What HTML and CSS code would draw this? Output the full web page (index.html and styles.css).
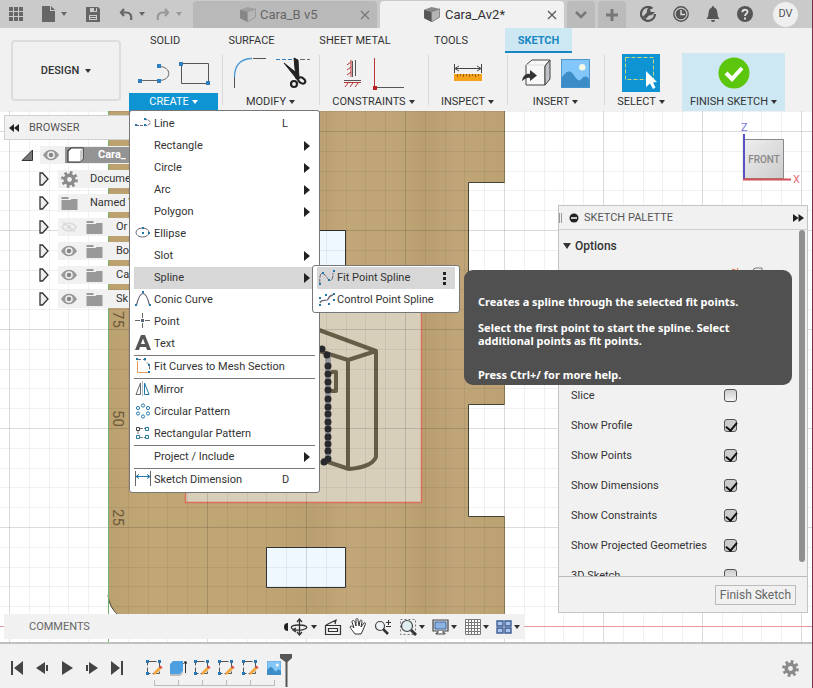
FILE: index.html
```html
<!DOCTYPE html>
<html lang="en">
<head>
<meta charset="utf-8">
<title>Cara_A v2*</title>
<link rel="stylesheet" href="styles.css">
</head>
<body>
<svg class="defs" width="0" height="0" aria-hidden="true">
  <symbol id="eye" viewBox="0 0 16 12"><path d="M0 6C4-1 12-1 16 6 12 13 4 13 0 6Z" fill="#999"/><circle cx="8" cy="6" r="3.8" fill="#f1f1f1"/><circle cx="8" cy="6" r="2.3" fill="#888"/></symbol>
  <symbol id="eye-off" viewBox="0 0 16 12"><path d="M1 6C4 1 12 1 15 6 12 11 4 11 1 6ZM2 1 14 11" fill="none" stroke="#dadada" stroke-width="1.6"/><circle cx="8" cy="6" r="2" fill="#dadada"/></symbol>
  <symbol id="folder" viewBox="0 0 16 13"><path d="M0 0H7V2H0ZM0 3H9L10 2H16V13H0Z" fill="#999"/></symbol>
  <symbol id="gear" viewBox="0 0 16 16"><circle cx="8" cy="8" r="6.4" fill="none" stroke="#8a8a8a" stroke-width="3" stroke-dasharray="2.5 2.53"/><circle cx="8" cy="8" r="4" fill="none" stroke="#8a8a8a" stroke-width="3.4"/></symbol>
  <symbol id="twist" viewBox="0 0 10 14"><path d="M1 1H3.500L9 7 3.500 13H1Z" fill="#eee" stroke="#333" stroke-width="1.3"/></symbol>
  <symbol id="sketch" viewBox="0 0 18 18"><path d="M2.500 2.500H14.500V14.500H2.500Z" fill="none" stroke="#555" stroke-dasharray="9 2"/><path d="M1 1h3v3H1zM13 1h3v3h-3zM1 13h3v3H1z" fill="#2878b8"/><path d="M8 16 9 13 14 8 16 10 11 15Z" fill="#f0a63c"/><path d="M14 8 15.500 6.500 17.500 8.500 16 10Z" fill="#e04b3c"/></symbol>
  <symbol id="photo" viewBox="0 0 30 30"><path d="M0 0H30V30H0Z" fill="#83c6fa"/><path d="M0 20C4 15 6 12 9 13 13 14 15 21 18 22 21 23 22 18 25 18 27 18 28 19 30 22V30H0Z" fill="#3c8cc8"/><circle cx="22" cy="8.500" r="3.300" fill="#f4f8e8"/><path d="M.5.5H29.500V29.500H.5Z" fill="none" stroke="#4a94ca"/></symbol>
  <symbol id="cube" viewBox="0 0 17 16"><path d="M0 3 8 0 17 2 8 5Z" fill="#888"/><path d="M0 3 8 5V16L0 12Z" fill="#555"/><path d="M8 5 16.500 2V11L8 16Z" fill="#b4b4b4" stroke="#666" stroke-width=".7"/></symbol>
</svg>
<div class="app">
  <header class="topbar">
    <div class="quick">
      <button aria-label="Data panel"><svg width="15" height="15"><path d="M0 0h4v4H0zM5 0h4v4H5zM10 0h4v4h-4zM0 5h4v4H0zM5 5h4v4H5zM10 5h4v4h-4zM0 10h4v4H0zM5 10h4v4H5zM10 10h4v4h-4z" fill="#666"/></svg></button>
      <button class="file" aria-label="File"><svg width="13" height="16"><path d="M0 0H8V5H13V16H0ZM9 0 13 4H9Z" fill="#666"/></svg><i class="caret"></i></button>
      <button class="save" aria-label="Save"><svg width="14" height="15"><path d="M0 0H12L14 2V15H0Z" fill="#666"/><path d="M4 1H11V5H4ZM3 8H11V13H3Z" fill="#ccc"/><path d="M8 1h2v3H8zM4 9h6v1H4zM4 11h6v1H4z" fill="#666"/></svg></button>
      <button class="undo" aria-label="Undo"><svg width="14" height="12"><path d="M5 1 2 4.500 5 8M2 4.500H7C11 4.500 13 7 12 12" fill="none" stroke="#666" stroke-width="2.200"/></svg><i class="caret"></i></button>
      <button class="undo off" aria-label="Redo"><svg width="14" height="12"><path d="M9 1 12 4.500 9 8M12 4.500H7C3 4.500 1 7 2 12" fill="none" stroke="#666" stroke-width="2.200"/></svg><i class="caret"></i></button>
    </div>
    <nav class="docs" aria-label="Documents">
      <div class="doc"><svg class="faded" width="16" height="15"><use href="#cube"/></svg><a href="#">Cara_B v5</a><button aria-label="Close Cara_B"><svg width="10" height="10"><path d="M1 1 9 9M9 1 1 9" stroke="#777" stroke-width="1.200"/></svg></button></div>
      <div class="doc current"><svg width="16" height="15"><use href="#cube"/></svg><a href="#">Cara_Av2*</a><button aria-label="Close Cara_A"><svg width="10" height="10"><path d="M1 1 9 9M9 1 1 9" stroke="#555" stroke-width="1.200"/></svg></button></div>
      <button class="mini" aria-label="Open documents"><svg width="14" height="10"><path d="M2 2 7 7 12 2" fill="none" stroke="#777" stroke-width="2.500"/></svg></button>
      <button class="mini" aria-label="New document"><svg width="14" height="14"><path d="M7 1V13M1 7H13" stroke="#777" stroke-width="3"/></svg></button>
    </nav>
    <div class="account">
      <button aria-label="Extensions"><svg width="16" height="16"><path d="M12.500 2.500A7 7 0 1 0 15 8" fill="none" stroke="#555" stroke-width="2.200"/><path d="M4 12 9 7" stroke="#555" stroke-width="3.600"/><path d="M7 4.500C6 9 8 10 12 9L15 6 11 6 10 4 12 1C9 1 7 2 7 4.500Z" fill="#555"/></svg></button>
      <button aria-label="Job status"><svg width="16" height="16"><circle cx="8" cy="8" r="7.200" fill="none" stroke="#555" stroke-width="1.400"/><circle cx="8" cy="8" r="5.300" fill="#555"/><path d="M8 4V8.500H12" fill="none" stroke="#ddd" stroke-width="1.400"/></svg></button>
      <button aria-label="Notifications"><svg width="14" height="16"><path d="M7 0C8 0 8 1 8.500 1.800 13 3.500 10 9 13.500 13H.5C4 9 1 3.500 5.500 1.800 6 1 6 0 7 0ZM5 14H9C9 16.500 5 16.500 5 14Z" fill="#555"/></svg></button>
      <button aria-label="Help"><svg width="16" height="16"><circle cx="8" cy="8" r="8" fill="#555"/><path d="M5.300 6.200C5.500 2.800 10.700 3 10.500 6 10.400 7.900 8 7.800 8 10" fill="none" stroke="#ddd" stroke-width="1.900"/><path d="M7 11.500h2v2H7z" fill="#ddd"/></svg></button>
      <button class="avatar">DV</button>
    </div>
  </header>

  <div class="ribbon">
    <button class="design">DESIGN <i class="caret"></i></button>
    <nav class="tabs" aria-label="Workspace tabs">
      <a href="#" class="solid">SOLID</a><a href="#" class="surface">SURFACE</a><a href="#" class="sheet">SHEET METAL</a><a href="#" class="tools">TOOLS</a><a href="#" class="sketch" aria-current="page">SKETCH</a>
    </nav>
    <div class="groups">
      <section class="group create">
        <div class="tools-row">
          <svg width="33" height="22"><path d="M3 18.500H22C35 18.500 35 4.500 22 4.500" fill="none" stroke="#666"/><path d="M1 17h4v4H1zM20 17h4v4h-4zM20 2h4v4h-4z" fill="#2f7fc0"/></svg>
          <svg width="32" height="24"><path d="M3.500 2.500H30.500V22.500H3.500Z" fill="none" stroke="#555"/><path d="M1 1h4v4H1zM28 20h4v4h-4z" fill="#2f7fc0"/></svg>
        </div>
        <button class="label">CREATE <i class="caret"></i></button>
        <ul class="menu">
          <li><button><svg width="16" height="16"><path d="M1 10.500H10C17 10.500 17 4.500 10 4.500" fill="none" stroke="#667" stroke-dasharray="3 1"/><path d="M0 9h2v2H0zM9 9h2v2H9zM9 3h2v2H9z" fill="#27a"/></svg>Line<kbd>L</kbd></button></li>
          <li><button>Rectangle<i class="more"></i></button></li>
          <li><button>Circle<i class="more"></i></button></li>
          <li><button>Arc<i class="more"></i></button></li>
          <li><button>Polygon<i class="more"></i></button></li>
          <li><button><svg width="16" height="16"><ellipse cx="7.500" cy="7.500" rx="6.500" ry="4.500" fill="none" stroke="#667"/><path d="M7 7h2v2H7zM7 2h2v2H7zM13 7h2v2h-2z" fill="#27a"/></svg>Ellipse</button></li>
          <li><button>Slot<i class="more"></i></button></li>
          <li class="open"><button>Spline<i class="more"></i></button>
            <ul class="submenu">
              <li class="open"><button><svg width="18" height="18"><path d="M2 15C1 7 3 2 6 5L11 11C14 13 15 9 15 4" fill="none" stroke="#667" stroke-dasharray="5 1"/><path d="M1 14h2v2H1zM4 3h2v2H4zM10 10h2v2h-2zM15 1h2v2h-2z" fill="#27a"/></svg>Fit Point Spline<i class="dots"></i></button></li>
              <li><button><svg width="18" height="18"><path d="M2 12C3 8 6 10 9 9 12 8 9 5 15 4" fill="none" stroke="#667" stroke-width="1.300"/><path d="M1 13h2v2H1zM1 6h2v2H1zM7 3h2v2H7zM10 12h2v2h-2zM15 2h2v2h-2zM15 8h2v2h-2z" fill="#27a"/></svg>Control Point Spline</button></li>
            </ul>
            <div class="tooltip" role="tooltip">
              <p>Creates a spline through the selected fit points.</p>
              <p>Select the first point to start the spline. Select additional points as fit points.</p>
              <p class="hint">Press Ctrl+/ for more help.</p>
            </div>
          </li>
          <li><button><svg width="16" height="16"><path d="M1.500 14C3 8 5 2.500 8 2.500S13 8 14.500 14" fill="none" stroke="#667" stroke-width="1.200"/><path d="M0 13h2v2H0zM14 13h2v2h-2zM7 0h2v2H7z" fill="#27a"/></svg>Conic Curve</button></li>
          <li><button><svg width="16" height="16"><path d="M0 7.500H5M10 7.500H15M7.500 0V5M7.500 10V15" stroke="#666"/><path d="M6 6h3v3H6z" fill="#567"/></svg>Point</button></li>
          <li><button><svg width="16" height="16"><path d="M0 15 6 0H10L16 15H12L11 12H5L4 15ZM6 9H10L8 3.500Z" fill="#555" fill-rule="evenodd"/></svg>Text</button></li>
          <li class="ruled"><button><svg width="16" height="16"><path d="M2.500 3V14.500H13" fill="none" stroke="#e79a55"/><path d="M3 1.500H9L14.500 7V14" fill="none" stroke="#667" stroke-dasharray="3 2"/><path d="M1 0h2v2H1zM9 0h2v2H9zM13 6h2v2h-2zM13 13h2v2h-2z" fill="#27a"/></svg>Fit Curves to Mesh Section</button></li>
          <li class="ruled"><button><svg width="16" height="16"><path d="M5.500 2V13.500H1Z" fill="none" stroke="#666"/><path d="M9.500 2V13.500H14Z" fill="none" stroke="#27a"/><path d="M7.500 0V15" stroke="#abc"/></svg>Mirror</button></li>
          <li><button><svg width="16" height="16" fill="none" stroke="#2878a8"><circle cx="8" cy="2.500" r="1.600"/><circle cx="3" cy="5" r="1.600"/><circle cx="13" cy="5" r="1.600"/><circle cx="3" cy="10.500" r="1.600"/><circle cx="13" cy="10.500" r="1.600"/><circle cx="8" cy="13.500" r="1.600"/></svg>Circular Pattern</button></li>
          <li><button><svg width="16" height="16" fill="none"><path d="M5 3.500H10M3 6V10M5 12.500H10" stroke="#777" stroke-dasharray="3 1"/><path d="M1.500 2.500h3v3h-3z" stroke="#444"/><path d="M10.500 2.500h3v3h-3zM1.500 10.500h3v3h-3zM10.500 10.500h3v3h-3z" stroke="#2878a8"/></svg>Rectangular Pattern</button></li>
          <li class="ruled"><button>Project / Include<i class="more"></i></button></li>
          <li class="ruled"><button><svg width="16" height="16"><path d="M.5 0V15M15.500 0V15" stroke="#666"/><path d="M1 5.500H15M4 3.500 1 5.500 4 7.500M12 3.500 15 5.500 12 7.500" fill="none" stroke="#27a"/></svg>Sketch Dimension<kbd>D</kbd></button></li>
        </ul>
      </section>
      <section class="group modify">
        <div class="tools-row">
          <svg width="36" height="34"><path d="M2.500 32V21" stroke="#555"/><path d="M2.500 21C2.500 9 9 2.500 20 2.500" fill="none" stroke="#4a9ad4" stroke-width="1.300"/><path d="M21 2.500H34" stroke="#555"/></svg>
          <svg width="34" height="34"><path d="M0 3.500H20" stroke="#2f7fc0" stroke-dasharray="4 2"/><path d="M24 3.500H34" stroke="#666" stroke-dasharray="5 2"/><path d="M8 7 20 22 23 19ZM18 2 20 23H23L22 4Z" fill="#222" stroke="#222"/><circle cx="18" cy="28" r="3" fill="none" stroke="#222" stroke-width="2.200"/><ellipse cx="26" cy="24.500" rx="4" ry="2.600" fill="none" stroke="#222" stroke-width="2.200" transform="rotate(35 26 24)"/></svg>
        </div>
        <button class="label">MODIFY <i class="caret"></i></button>
      </section>
      <section class="group constraints">
        <div class="tools-row">
          <svg width="20" height="32"><path d="M9.500 4V20M12.500 3V19M1 23.500H18" stroke="#555"/><path d="M8 3V20M8 5 4 8M8 10 4 13M8 15 4 18M1 25.500H18M5 26 2 30M10 26 7 30M15 26 12 30" stroke="#b33" fill="none"/></svg>
          <svg width="34" height="34"><path d="M3.500 2V32" stroke="#b33"/><path d="M4 31.500H33" stroke="#555"/><path d="M2 30h4v4H2z" fill="#b22"/></svg>
        </div>
        <button class="label">CONSTRAINTS <i class="caret"></i></button>
      </section>
      <section class="group inspect">
        <div class="tools-row"><svg width="30" height="20"><path d="M1.500 1V10M28.500 1V10M2 5.500H28M6 3 2 5.500 6 8M24 3 28 5.500 24 8" fill="none" stroke="#444"/><path d="M1 11H29V18H1Z" fill="#f5a31b"/><path d="M4.500 11v3M7.500 11v2M10.500 11v3M13.500 11v2M16.500 11v3M19.500 11v2M22.500 11v3M25.500 11v2" stroke="#965c08"/></svg></div>
        <button class="label">INSPECT <i class="caret"></i></button>
      </section>
      <section class="group insert">
        <div class="tools-row">
          <svg width="32" height="32"><path d="M5 8 11 3H29L24 9V28H5Z" fill="#f8f8f8" stroke="#444"/><path d="M24 9 29 3V22L24 28Z" fill="#bfc2c6" stroke="#444"/><path d="M5 8H24" stroke="#ddd"/><path d="M1 24C2 18 6 16 9 17V13L16 18.500 9 24V21C6 20 4 22 1 24Z" fill="#333"/></svg>
          <svg width="29" height="29"><use href="#photo"/></svg>
        </div>
        <button class="label">INSERT <i class="caret"></i></button>
      </section>
      <section class="group select">
        <div class="tools-row"><svg width="38" height="38"><path d="M0 0H38V38H0Z" fill="#0e93d3"/><path d="M3.500 3.500H31.500V25.500H3.500Z" fill="none" stroke="#c8d87c" stroke-dasharray="4 2"/><path d="M24 17V33L28 29.500 31 35 33.500 33.500 31 28.500 35 28Z" fill="#fff"/></svg></div>
        <button class="label">SELECT <i class="caret"></i></button>
      </section>
      <section class="group finish">
        <div class="tools-row"><svg width="32" height="32"><circle cx="16" cy="16" r="15.500" fill="#5cc60c"/><path d="M8 16 14 22 24 11" fill="none" stroke="#fff" stroke-width="4"/></svg></div>
        <button class="label">FINISH SKETCH <i class="caret"></i></button>
      </section>
    </div>
  </div>

  <main class="viewport">
    <svg class="scene" aria-label="Sketch canvas">
      <defs>
        <pattern id="grid" x="9" y="20" width="99" height="99" patternUnits="userSpaceOnUse">
          <path d="M20.500 0V99M40.500 0V99M59.500 0V99M79.500 0V99M0 20.500H99M0 40.500H99M0 59.500H99M0 79.500H99" stroke="#000" stroke-opacity=".06"/>
          <path d="M.5 0V99M0 .5H99" stroke="#000" stroke-opacity=".14"/>
        </pattern>
        <linearGradient id="wood">
          <stop offset="0" stop-color="#bba070"/><stop offset=".1" stop-color="#c1a676"/><stop offset=".4" stop-color="#bfa474"/><stop offset=".52" stop-color="#baa070"/><stop offset=".6" stop-color="#c1a778"/><stop offset=".74" stop-color="#bfa476"/><stop offset=".8" stop-color="#b99e70"/><stop offset=".88" stop-color="#c0a578"/><stop offset="1" stop-color="#bca172"/>
        </linearGradient>
      </defs>
      <path d="M0 0H3000V3000H0Z" fill="#fff"/>
      <path d="M108 0H504V72H469V183H504V294H469V405H504V504H119Q108 496 108 484Z" fill="url(#wood)"/>
      <path d="M504 71.500H468.500V183H504M504 293.500H468.500V405.500H504M108 484Q109 496 118 504" fill="none" stroke="#443"/>
      <path d="M504.500 0V72M504.500 183V294M504.500 405V504" stroke="#9d8860"/>
      <path d="M266.500 436.500H345.500V476.500H266.500ZM266.500 119.500H345.500V159.500H266.500Z" fill="#eff8ff" stroke="#333"/>
      <path d="M185.500 156.500H421.500V391.500H185.500Z" fill="#d8cfba" stroke="#d9705c" stroke-width="1.500"/>
      <g fill="none" stroke="#675c45" stroke-width="4" stroke-linejoin="round"><path d="M300 212 376 240 348 249 310 237M348 249V357M376 240V346Q372 356 349 358L322 349M330 261H336V280H330"/></g>
      <path d="M328 244V347" stroke="#9a9c9c" stroke-width="6"/>
      <g fill="#292a2d"><circle cx="322" cy="238" r="3.500"/><circle cx="327" cy="244" r="3.500"/><circle cx="328" cy="255" r="3.500"/><circle cx="328" cy="263" r="3.500"/><circle cx="328" cy="271" r="3.500"/><circle cx="328" cy="279" r="3.500"/><circle cx="328" cy="288" r="3.500"/><circle cx="328" cy="296" r="3.500"/><circle cx="328" cy="303" r="3.500"/><circle cx="328" cy="311" r="3.500"/><circle cx="328" cy="318" r="3.500"/><circle cx="328" cy="326" r="3.500"/><circle cx="328" cy="333" r="3.500"/><circle cx="328" cy="340" r="3.500"/><circle cx="328" cy="348" r="3.500"/><circle cx="324" cy="351" r="3.500"/></g>
      <path d="M0 0H3000V3000H0Z" fill="url(#grid)"/>
      <path d="M108.500 0V532" stroke="#6fb36f"/>
      <path d="M0 515.500H3000" stroke="#e59c9c"/>
      <g class="ruler"><text transform="translate(113 200) rotate(90)">75</text><text transform="translate(113 299) rotate(90)">50</text><text transform="translate(113 398) rotate(90)">25</text></g>
    </svg>

    <aside class="browser">
      <h2><svg width="10" height="8"><path d="M5 0V8L0 4ZM10 0V8L5 4Z" fill="#222"/></svg>BROWSER</h2>
      <ul class="tree">
        <li class="root"><svg width="12" height="12"><path d="M11.500 1V11.500H1Z" fill="#777" stroke="#333"/></svg><div class="node"><svg width="16" height="12"><use href="#eye"/></svg><span class="name"><svg width="17" height="16"><path d="M1 4 4 1H16V12L13 15H1Z" fill="#fff" stroke="#333" stroke-width="1.200"/><path d="M13 4 16 1V12L13 15Z" fill="#ccc"/></svg>Cara_</span></div></li>
        <li><svg width="10" height="14"><use href="#twist"/></svg><div class="node"><svg width="17" height="17"><use href="#gear"/></svg><span>Docume</span></div></li>
        <li><svg width="10" height="14"><use href="#twist"/></svg><div class="node"><svg width="17" height="13"><use href="#folder"/></svg><span>Named V</span></div></li>
        <li><svg width="10" height="14"><use href="#twist"/></svg><div class="node sub"><svg width="16" height="12"><use href="#eye-off"/></svg><svg width="17" height="13"><use href="#folder"/></svg><span>Or</span></div></li>
        <li><svg width="10" height="14"><use href="#twist"/></svg><div class="node sub"><svg width="16" height="12"><use href="#eye"/></svg><svg width="17" height="13"><use href="#folder"/></svg><span>Bo</span></div></li>
        <li><svg width="10" height="14"><use href="#twist"/></svg><div class="node sub"><svg width="16" height="12"><use href="#eye"/></svg><svg width="17" height="13"><use href="#folder"/></svg><span>Ca</span></div></li>
        <li><svg width="10" height="14"><use href="#twist"/></svg><div class="node sub"><svg width="16" height="12"><use href="#eye"/></svg><svg width="17" height="13"><use href="#folder"/></svg><span>Sk</span></div></li>
      </ul>
    </aside>

    <svg class="viewcube" width="66" height="66" aria-label="View cube">
      <defs><linearGradient id="face" x2="1" y2="1"><stop stop-color="#eee"/><stop offset="1" stop-color="#ccc"/></linearGradient></defs>
      <path d="M9.500 17.500H48.500V56.500H9.500Z" fill="url(#face)" stroke="#888"/>
      <path d="M9 12V57" stroke="#5a50c8" stroke-width="2"/><path d="M8 57.500H56" stroke="#d4505a" stroke-width="2"/>
      <text class="z" x="6" y="9">Z</text><text class="x" x="58" y="61">X</text><text class="front" x="29" y="41" text-anchor="middle">FRONT</text>
    </svg>

    <aside class="palette">
      <h2><i class="grip"></i><svg width="10" height="10"><circle cx="5" cy="5" r="4.500" fill="#222"/><path d="M2 5H8" stroke="#fff" stroke-width="1.500"/></svg>SKETCH PALETTE<svg class="end" width="11" height="8"><path d="M0 0V8L5.500 4ZM5.500 0V8L11 4Z" fill="#222"/></svg></h2>
      <div class="scroller">
        <h3><i class="caret"></i>Options</h3>
        <div class="linetype"><svg width="10" height="14"><path d="M2 13 8 1M2 2 8 4" stroke="#d86a3a"/></svg><svg width="16" height="14"><path d="M1 10V4Q1 1 4 1H10V4H14V10Z" fill="none" stroke="#777"/></svg></div>
        <label>Slice<input type="checkbox"></label>
        <label>Show Profile<input type="checkbox" checked></label>
        <label>Show Points<input type="checkbox" checked></label>
        <label>Show Dimensions<input type="checkbox" checked></label>
        <label>Show Constraints<input type="checkbox" checked></label>
        <label>Show Projected Geometries<input type="checkbox" checked></label>
        <label>3D Sketch<input type="checkbox"></label>
      </div>
      <footer><button>Finish Sketch</button></footer>
    </aside>

    <div class="dock">
      <span>COMMENTS</span>
      <div class="nav">
        <button aria-label="Orbit"><svg width="25" height="18"><path d="M4 5A4 4 0 0 0 4 13Z" fill="#222"/><path d="M15.500 1V17M13 4 15.500 1 18 4M13 14 15.500 17 18 14" fill="none" stroke="#333" stroke-width="1.300"/><path d="M12 12C5 11 6 7 14 7S25 9 21 11 16 12 10 12M12 10 9 12 12 14" fill="none" stroke="#333" stroke-width="1.300"/></svg><i class="caret"></i></button>
        <button aria-label="Look at"><svg width="18" height="18"><path d="M2 7 12 2 11 6M1.500 7.500H16.500V16.500H1.500ZM4.500 10.500H13.500V13.500H4.500Z" fill="none" stroke="#333" stroke-width="1.200"/></svg></button>
        <button aria-label="Pan"><svg width="18" height="18"><path d="M6 16C4 13 2 11 1 9 2 7 4 9 5 10L3 4C3 2 5 2 6 4L7 8 7 2C7 0 9 0 9 2L10 8 11 3C12 1 13 2 13 4L12 9 15 5C16 4 17 5 16 7L14 12 12 16Z" fill="#fff" stroke="#333"/></svg></button>
        <button aria-label="Zoom"><svg width="18" height="18"><circle cx="6" cy="8" r="4.500" fill="#eef3f6" stroke="#444" stroke-width="1.200"/><path d="M9 11 14 16" stroke="#333" stroke-width="2.500"/><path d="M12 4.500H17M14.500 2V7M12 8.500H17" stroke="#333"/></svg></button>
        <button aria-label="Fit"><svg width="18" height="18"><path d="M1.500 1.500H16.500V16.500H1.500Z" fill="none" stroke="#777" stroke-dasharray="2 2"/><circle cx="8" cy="8" r="5.500" fill="#dfecef" stroke="#444" stroke-width="1.200"/><path d="M12 12 17 17" stroke="#333" stroke-width="2.800"/></svg><i class="caret"></i></button>
        <button aria-label="Display settings"><svg width="17" height="17"><path d="M1 2H16V13H1Z" fill="#ddd" stroke="#444" stroke-width="1.200"/><path d="M3 4H14V11H3Z" fill="#8db2e0" stroke="#3868a8"/><path d="M6 13V15H4V16H13V15H11V13" fill="#fff" stroke="#444"/></svg><i class="caret"></i></button>
        <button aria-label="Grid and snaps"><svg width="17" height="17"><path d="M1.500 1.500H16.500V16.500H1.500ZM4.500 1V16M7.500 1V16M10.500 1V16M13.500 1V16M1 4.500H16M1 7.500H16M1 10.500H16M1 13.500H16" fill="#fff" stroke="#777"/></svg><i class="caret"></i></button>
        <button aria-label="Viewports"><svg width="16" height="14"><path d="M1 1H7V6H1ZM9 1H15V6H9ZM1 8H7V13H1ZM9 8H15V13H9Z" fill="#a9c4ec" stroke="#3c5c94" stroke-width="1.400"/></svg><i class="caret"></i></button>
      </div>
    </div>
  </main>

  <footer class="timeline">
    <div class="play">
      <button aria-label="Go to start"><svg width="14" height="14"><path d="M1 0H3V14H1ZM13 0V14L4 7Z" fill="#444"/></svg></button>
      <button aria-label="Step back"><svg width="14" height="12"><path d="M10 0V12L1 6ZM11 3H13V9H11Z" fill="#444"/></svg></button>
      <button aria-label="Play"><svg width="14" height="14"><path d="M2 0 13 7 2 14Z" fill="#444"/></svg></button>
      <button aria-label="Step forward"><svg width="14" height="12"><path d="M4 0V12L13 6ZM1 3H3V9H1Z" fill="#444"/></svg></button>
      <button aria-label="Go to end"><svg width="14" height="14"><path d="M11 0H13V14H11ZM1 0V14L10 7Z" fill="#444"/></svg></button>
    </div>
    <ol class="steps">
      <li><svg width="18" height="18"><use href="#sketch"/></svg></li>
      <li><svg width="18" height="18"><path d="M1 5 4 2H14V12L11 15H1Z" fill="#4c9fe0"/><path d="M1 15H11L14 12V14L11 17H1Z" fill="#bbb"/><path d="M16.500 14V3M14.500 5 16.500 2 18 5" fill="none" stroke="#333"/></svg></li>
      <li><svg width="18" height="18"><use href="#sketch"/></svg></li>
      <li><svg width="18" height="18"><use href="#sketch"/></svg></li>
      <li><svg width="18" height="18"><use href="#sketch"/></svg></li>
      <li><svg width="14" height="14"><use href="#photo"/></svg></li>
    </ol>
    <svg class="marker" width="12" height="33"><path d="M0 0H12V4L7.500 8V33H5.500V8L0 4Z" fill="#555"/></svg>
    <button class="prefs" aria-label="Timeline settings"><svg width="17" height="17"><use href="#gear"/></svg></button>
  </footer>
</div>
</body>
</html>
```
FILE: styles.css
```css
* { box-sizing: border-box; }
body { margin: 0; font: 11px/14px Roboto, "Liberation Sans", sans-serif; color: #333; }
button { border: 0; padding: 0; margin: 0; background: none; font: inherit; color: inherit; display: flex; align-items: center; }
a { color: inherit; text-decoration: none; }
ul, ol { list-style: none; margin: 0; padding: 0; }
h2, h3, p { margin: 0; }
svg { display: block; flex: none; }
.defs { position: absolute; }

.app { display: grid; grid-template-rows: 28px auto 1fr auto; min-height: 100vh; background: #f1f1f1; border-right: 1px solid #7c3048; overflow: hidden; }
.caret { width: 0; height: 0; border: 3px solid transparent; border-top: 4px solid #333; border-bottom: 0; flex: none; }

/* Title bar */
.topbar { display: flex; background: #cacaca; }
.quick { display: flex; align-items: center; width: 193px; padding-left: 9px; }
.quick .caret { border-top-color: #666; }
.quick button { gap: 6px; }
.file { margin-left: 18px; }
.save { margin-left: 19px; }
.undo { margin-left: 19px; }
.undo + .undo { margin-left: 11px; }
.off { opacity: .5; }
.docs { display: flex; align-items: stretch; gap: 3px; font-size: 13px; }
.doc { width: 184px; margin-top: 1px; padding: 0 7px 0 47px; display: flex; align-items: center; gap: 4px; background: #b9b9b9; border-radius: 4px 4px 0 0; color: #666; }
.doc.current { padding-left: 44px; background: #f1f1f1; color: #333; gap: 5px; }
.doc button { margin-left: auto; }
.faded { opacity: .5; }
.mini { width: 28px; margin-top: 1px; justify-content: center; background: #bbb; border-radius: 4px 4px 0 0; }
.account { display: flex; flex: 1; align-items: center; justify-content: flex-end; gap: 17px; padding-right: 14px; }
.avatar { width: 25px; height: 25px; margin-left: 3px; border-radius: 50%; background: #efefef; justify-content: center; color: #555; }

/* Ribbon */
.ribbon { display: grid; grid-template-columns: 129px 1fr; grid-template-rows: 25px 58px; }
.design { grid-row: 1 / 3; margin: 12px 8px 10px 11px; justify-content: center; gap: 6px; border: 2px solid #ddd; border-radius: 4px; font-weight: 500; }
.tabs { display: flex; }
.tabs a { display: flex; align-items: center; justify-content: center; }
.solid { width: 72px; }
.surface { width: 101px; }
.sheet { width: 106px; }
.tools { width: 86px; }
.tabs .sketch { width: 67px; margin-left: 11px; padding-top: 2px; border-bottom: 2px solid #1a87c4; background: #cde8f3; color: #1a87c4; font-weight: 700; }
.groups { display: flex; }
.group { position: relative; display: flex; flex-direction: column; justify-content: flex-end; }
.group + .group::before { content: ""; position: absolute; left: 0; top: 2px; bottom: 6px; width: 1px; background: #d8d8d8; }
.tools-row { flex: 1; display: flex; align-items: center; justify-content: center; gap: 8px; }
.label { height: 18px; justify-content: center; gap: 3px; white-space: nowrap; }
.create { width: 93px; }
.create > .tools-row { justify-content: flex-start; padding-left: 8px; }
.create > .label { width: 89px; background: #0e93d3; color: #fff; }
.create > .label .caret { border-top-color: #fff; }
.modify { width: 97px; }
.constraints { width: 109px; }
.inspect { width: 79px; }
.insert { width: 97px; }
.select { width: 74px; }
.finish { width: 103px; margin-left: 4px; background: #cde8f3; }
.group.finish::before { display: none; }

/* Create menu */
.menu, .submenu { position: absolute; z-index: 5; padding: 1px 0; background: #fff; border: 1px solid #777; border-radius: 3px; font-size: 11px; }
.menu { left: 0; top: 57px; padding-top: 2px; width: 191px; }
.menu li { position: relative; padding-left: 4px; }
.menu li > button { position: relative; width: 100%; height: 22px; padding-left: 20px; }
.menu button > svg { position: absolute; left: 1px; top: 2px; }
.menu .open > button { background: #d7d7d7; }
.menu kbd { position: absolute; left: 148px; font: inherit; }
.more { position: absolute; right: 9px; border: 5px solid transparent; border-left: 6px solid #222; border-right: 0; }
.menu .ruled { padding-top: 1px; }
.ruled::before { content: ""; position: absolute; top: 0; left: 4px; right: 4px; height: 1px; background: #777; }
.submenu { left: 182px; top: -2px; width: 148px; }
.submenu li { padding-right: 4px; }
.dots { position: absolute; right: 9px; width: 3px; height: 3px; background: #222; box-shadow: 0 -5px #222, 0 5px #222; }
.tooltip { position: absolute; z-index: 6; left: 334px; top: 3px; width: 328px; padding: 25px 14px 4px; border-radius: 9px; background: #505050; color: #fff; font: 700 11px/13px "Noto Sans", "Open Sans", sans-serif; }
.tooltip p { margin-bottom: 13px; }
.tooltip .hint { margin: 21px 0 0; }

/* Viewport */
.viewport { position: relative; min-height: 531px; display: flex; flex-direction: column; justify-content: flex-end; }
.scene { position: absolute; inset: 0; width: 100%; height: 100%; }
.ruler { font-size: 15px; fill: #6b5a3a; }
.browser { position: absolute; left: 4px; top: 4px; width: 200px; }
.browser h2, .palette h2 { display: flex; align-items: center; height: 24px; font-size: 11px; font-weight: 400; color: #555; background: #f1f1f1; border: 1px solid #d0d0d0; }
.browser h2 { height: 25px; gap: 10px; padding-left: 4px; }
.tree { padding: 3px 0 0 17px; }
.tree li { display: flex; align-items: center; gap: 9px; height: 24px; padding-left: 18px; }
.tree .root { padding-left: 0; gap: 7px; }
.node { display: flex; flex: 1; align-items: center; gap: 12px; height: 18px; padding-left: 3px; background: #f1f1f1; }
.node.sub { gap: 9px; }
.node.sub span { margin-left: 4px; }
.root .node { gap: 6px; }
.name { flex: 1; height: 16px; display: flex; align-items: center; gap: 14px; padding-left: 2px; background: #949494; color: #fff; font-weight: 700; }
.viewcube { position: absolute; right: 11px; top: 11px; font-size: 11px; }
.z { fill: #7a76e0; }
.x { fill: #e0707a; }
.front { fill: #888; font-weight: 500; font-size: 10px; }

/* Sketch palette */
.palette { position: absolute; right: 4px; top: 94px; width: 250px; background: #f1f1f1; border: 1px solid #c4c4c4; }
.palette h2 { border-width: 0 0 1px; gap: 5px; }
.grip { width: 3px; height: 10px; margin-right: 2px; border: 1px solid #999; border-width: 0 1px; }
.end { margin-left: auto; margin-right: 3px; }
.scroller { position: relative; height: 347px; overflow: hidden; border-bottom: 1px solid #bbb; }
.scroller::after { content: ""; position: absolute; right: 2px; top: 0; width: 6px; height: 332px; border-radius: 3px; background: #909090; }
.palette h3 { display: flex; align-items: center; gap: 4px; height: 31px; padding-left: 4px; font-size: 12px; font-weight: 500; }
.palette h3 .caret { border-width: 6px 4px 0; }
.linetype { display: flex; gap: 12px; height: 120px; padding: 6px 0 0 171px; }
.palette label { display: flex; align-items: center; justify-content: space-between; height: 30px; padding: 0 70px 0 12px; }
.palette input { appearance: none; width: 13px; height: 13px; margin: 0 0 2px; border: 1px solid #555; border-radius: 3px; background: linear-gradient(#ccc, #f4f4f4); }
.palette input:checked { position: relative; background: #ccc; }
.palette input:checked::after { content: ""; position: absolute; left: 3px; top: 0; width: 5px; height: 9px; border: solid #111; border-width: 0 2px 2px 0; transform: rotate(40deg); }
.palette footer { display: flex; justify-content: flex-end; padding: 8px 11px 7px; }
.palette footer button { height: 20px; padding: 0 4px; border: 1px solid #bbb; font-size: 12px; color: #666; }

/* Comments and navigation */
.dock { position: relative; display: flex; align-items: center; width: 520px; height: 25px; margin: 0 0 3px 4px; padding: 0 4px 0 25px; background: #f1f1f1; color: #666; }
.nav { display: flex; align-items: center; gap: 7px; margin-left: auto; }
.nav button { gap: 2px; }

/* Timeline */
.timeline { display: flex; height: 46px; border-top: 2px solid #c0c0c0; }
.play { display: flex; align-items: center; gap: 11px; padding: 4px 0 0 10px; }
.steps { display: flex; margin-left: 18px; padding-top: 14px; }
.steps li { position: relative; display: flex; justify-content: center; align-items: center; width: 24px; height: 19px; }
.steps li::after { content: ""; position: absolute; left: 12px; right: -12px; top: 22px; height: 5px; border: solid #bbb; border-width: 0 0 1px 1px; }
.steps li:last-child::after { right: 11px; }
.marker { margin: 10px 0 0 -6px; }
.prefs { margin: 4px 13px 0 auto; }
```
